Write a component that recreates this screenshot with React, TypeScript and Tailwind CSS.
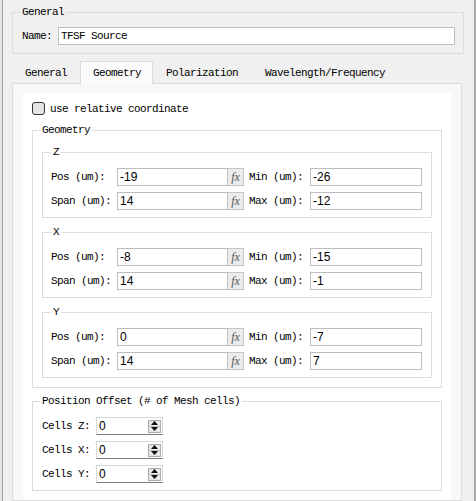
const Field = ({ value, w }: { value: string; w: string }) => (
  <div className={`${w} h-[18px] border border-[#bdbdbd] bg-white pl-[2px] flex items-center font-['Liberation_Sans',sans-serif] text-[12px] tracking-normal`}>
    {value}
  </div>
)

const FxButton = () => (
  <div className="w-[16px] h-[18px] border border-l-0 border-[#c4c4c4] bg-[#ececec] flex items-center justify-center font-['Liberation_Serif',serif] italic text-[12px] tracking-normal text-[#555]">
    fx
  </div>
)

const AxisRow = ({ left, right, a, b }: { left: string; right: string; a: string; b: string }) => (
  <div className="flex h-[18px] items-center">
    <span className="w-[66px]">{left}</span>
    <Field value={a} w="w-[111px]" />
    <FxButton />
    <span className="w-[66px] pl-[5px]">{right}</span>
    <Field value={b} w="w-[112px]" />
  </div>
)

const AxisBox = ({ axis, pos, span, min, max }: { axis: string; pos: string; span: string; min: string; max: string }) => (
  <fieldset className="border border-[#dcdcdc] pl-[8px] pr-[9px] pt-[9px] pb-[7px]">
    <legend className="px-[2px] h-[14px] leading-[14px]">{axis}</legend>
    <div className="flex flex-col gap-[6px]">
      <AxisRow left="Pos (um):" right="Min (um):" a={pos} b={min} />
      <AxisRow left="Span (um):" right="Max (um):" a={span} b={max} />
    </div>
  </fieldset>
)

const SpinBox = ({ label }: { label: string }) => (
  <div className="flex h-[18px] items-center">
    <span className="w-[54px]">{label}</span>
    <div className="w-[67px] h-[18px] border border-[#d6d6d6] border-b-[#7a7a7a] bg-white flex items-center justify-between pl-[2px] pr-[1px]">
      <span className="font-['Liberation_Sans',sans-serif] text-[12px] tracking-normal">0</span>
      <div className="w-[13px] h-[13px] border border-[#adadad] bg-[#e9e9e9] flex flex-col">
        <div className="flex-1 flex items-center justify-center border-b border-[#c8c8c8]">
          <svg width="7" height="4" viewBox="0 0 7 4"><path d="M3.5 0L7 4H0z" fill="#111" /></svg>
        </div>
        <div className="flex-1 flex items-center justify-center">
          <svg width="7" height="4" viewBox="0 0 7 4"><path d="M0 0h7L3.5 4z" fill="#111" /></svg>
        </div>
      </div>
    </div>
  </div>
)

export default function App() {
  return (
    <div className="w-[476px] h-[501px] overflow-hidden bg-[#f0f0f0] flex text-black font-['Liberation_Mono',monospace] text-[11px] tracking-[-0.6px] leading-[14px]">
      <div className="w-[3px] shrink-0 bg-[#e4e4e4] border-r border-[#a0a0a0]" />
      <div className="flex-1 pl-[9px] pr-[10px] pt-[5px] flex flex-col">
        {/* General */}
        <fieldset className="w-[452px] border border-[#dcdcdc] pl-[9px] pr-[8px] pt-[8px] pb-[8px]">
          <legend className="-ml-[2px] px-[2px] h-[14px] leading-[14px]">General</legend>
          <div className="flex h-[18px] items-center">
            <span className="w-[36px]">Name:</span>
            <div className="flex-1 h-[18px] border border-[#bdbdbd] bg-white pl-[2px] flex items-center">
              TFSF Source
            </div>
          </div>
        </fieldset>

        {/* Tabs */}
        <div className="mt-[7px] flex items-end h-[22px]">
          <div className="w-[68px] h-[20px] pl-[13px] flex items-center">General</div>
          <div className="relative z-10 -mb-px w-[73px] h-[23px] pl-[12px] pb-[1px] border border-b-0 border-[#dcdcdc] bg-[#fbfbfb] flex items-center">
            Geometry
          </div>
          <div className="w-[100px] h-[20px] pl-[13px] flex items-center">Polarization</div>
          <div className="w-[144px] h-[20px] pl-[12px] flex items-center">Wavelength/Frequency</div>
        </div>

        {/* Tab pane */}
        <div className="w-[450px] flex-1 border border-[#dcdcdc] bg-[#f8f8f8] px-[10px] pt-[9px] flex flex-col">
          <div className="flex-1 bg-white px-[9px] pt-[9px]">
            <label className="flex items-center gap-[5px] h-[13px]">
              <span className="w-[13px] h-[13px] rounded-[3px] border border-[#333] bg-[#e5e5e5]" />
              use relative coordinate
            </label>

            <fieldset className="mt-[8px] border border-[#dcdcdc] pl-[9px] pr-[9px] pt-[8px] pb-[9px]">
              <legend className="-ml-[2px] px-[2px] h-[14px] leading-[14px]">Geometry</legend>
              <div className="flex flex-col gap-[7px]">
                <AxisBox axis="Z" pos="-19" span="14" min="-26" max="-12" />
                <AxisBox axis="X" pos="-8" span="14" min="-15" max="-1" />
                <AxisBox axis="Y" pos="0" span="14" min="-7" max="7" />
              </div>
            </fieldset>

            <fieldset className="mt-[6px] border border-[#dcdcdc] pl-[9px] pr-[9px] pt-[9px] pb-[7px]">
              <legend className="-ml-[2px] px-[2px] h-[14px] leading-[14px]">Position Offset (# of Mesh cells)</legend>
              <div className="flex flex-col gap-[6px]">
                <SpinBox label="Cells Z:" />
                <SpinBox label="Cells X:" />
                <SpinBox label="Cells Y:" />
              </div>
            </fieldset>
          </div>
        </div>
      </div>
      <div className="w-[2px] shrink-0 bg-[#a8a8a8]" />
    </div>
  )
}
